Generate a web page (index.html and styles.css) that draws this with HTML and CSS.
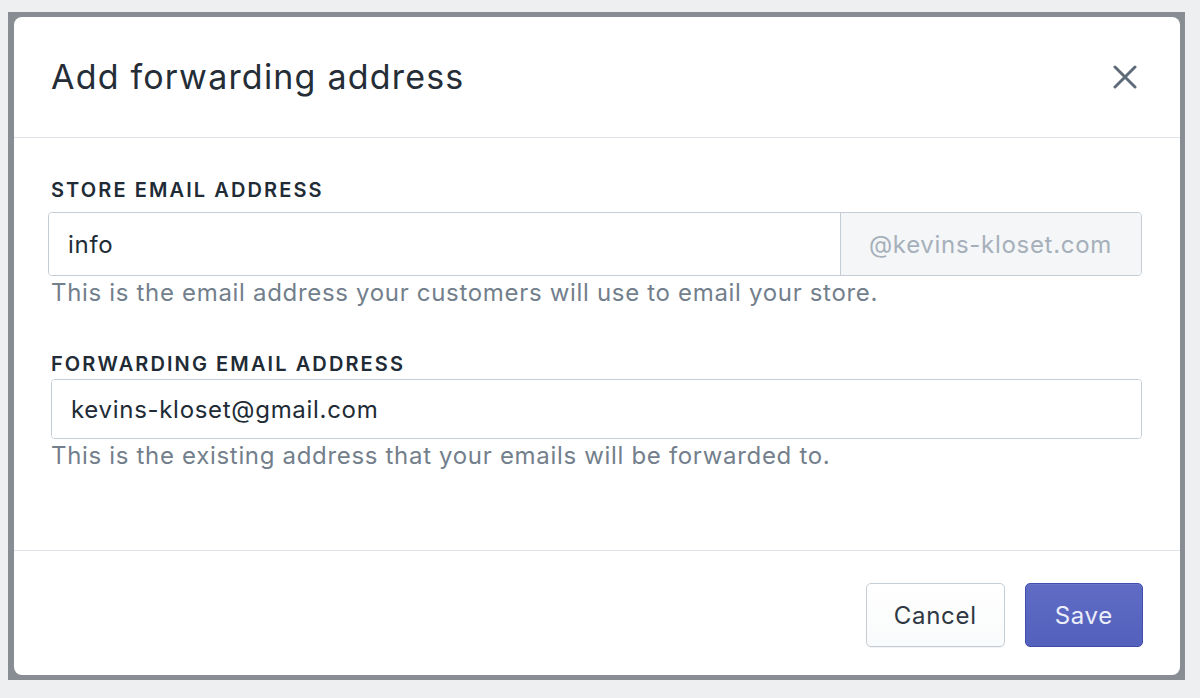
FILE: index.html
```html
<!DOCTYPE html>
<html lang="en">
<head>
  <meta charset="UTF-8" />
  <meta name="viewport" content="width=device-width, initial-scale=1.0"/>
  <title>Add forwarding address</title>
  <link rel="stylesheet" href="styles.css">
</head>
<body>

<div class="backdrop">
  <div class="modal">

    <div class="modal-header">
      <h2 class="modal-title">Add forwarding address</h2>
      <button class="close" aria-label="Close">
        <svg width="24" height="24" viewBox="0 0 24 24">
          <path d="M2 2 L22 22 M22 2 L2 22" stroke="#5f6b78" stroke-width="3" stroke-linecap="round" fill="none"/>
        </svg>
      </button>
    </div>

    <div class="modal-body">
      <div class="field field-store">
        <label class="label" for="store">STORE EMAIL ADDRESS</label>
        <div class="input-group">
          <input id="store" class="input" type="text" value="info"/>
          <span class="suffix">@kevins-kloset.com</span>
        </div>
        <p class="help">This is the email address your customers will use to email your store.</p>
      </div>

      <div class="field field-forward">
        <label class="label" for="forward">FORWARDING EMAIL ADDRESS</label>
        <div class="input-group">
          <input id="forward" class="input" type="text" value="kevins-kloset@gmail.com"/>
        </div>
        <p class="help">This is the existing address that your emails will be forwarded to.</p>
      </div>
    </div>

    <div class="modal-footer">
      <button class="btn">Cancel</button>
      <button class="btn btn-primary">Save</button>
    </div>

  </div>
</div>

</body>
</html>
```

FILE: styles.css
```css
:root {
  --ink: #212b36;
  --subdued: #737f8c;
  --border: #c4cdd5;
  --divider: #dfe3e8;
  --primary: #5c6ac4;
}
* {
  box-sizing: border-box;
}
body {
  margin: 0;
  background: #eeeff0;
  font-family: Inter, "Liberation Sans", sans-serif;
  color: var(--ink);
}
.backdrop {
  margin: 12px 0 0 8px;
  width: 1177px;
  height: 668px;
  padding: 5px 5px 5px 6px;
  background: #878d93;
}
.modal {
  height: 100%;
  background: #fff;
  border-radius: 8px;
  display: flex;
  flex-direction: column;
}
.modal-header {
  height: 121px;
  padding: 0 38px 0 37px;
  border-bottom: 1px solid var(--divider);
  display: flex;
  align-items: center;
  justify-content: space-between;
}
.modal-title {
  margin: 0;
  font-size: 34px;
  font-weight: 400;
  line-height: 40px;
  letter-spacing: 1.2px;
  color: #252d37;
}
.close {
  background: none;
  border: none;
  padding: 0;
  margin-right: 5px;
  width: 24px;
  height: 24px;
  cursor: pointer;
}
.close svg {
  display: block;
}
.modal-body {
  flex: 1;
  padding: 40px 38px 0 37px;
}
.label {
  display: block;
  font-size: 20px;
  line-height: 24px;
  font-weight: 600;
  letter-spacing: 2.1px;
  color: var(--ink);
}
.field-store .label {
  margin-bottom: 10px;
}
.field-forward {
  margin-top: 45px;
}
.field-forward .label {
  margin-bottom: 3px;
}
.input-group {
  display: flex;
  border: 1px solid var(--border);
  border-radius: 4px;
  overflow: hidden;
}
.field-store .input-group {
  height: 64px;
  margin-left: -3px;
}
.field-forward .input-group {
  height: 60px;
}
.input {
  flex: 1;
  min-width: 0;
  border: none;
  padding: 0 19px;
  font-family: inherit;
  font-size: 24px;
  letter-spacing: 0.7px;
  color: var(--ink);
  background: #fff;
  outline: none;
}
.suffix {
  display: flex;
  align-items: center;
  padding: 0 29px 0 28px;
  border-left: 1px solid var(--border);
  background: #f4f6f8;
  font-size: 24px;
  letter-spacing: 0.7px;
  color: #a6b0ba;
}
.help {
  margin: 3px 0 0;
  font-size: 24px;
  line-height: 28px;
  letter-spacing: 0.68px;
  color: var(--subdued);
}
.modal-footer {
  padding: 32px 37px 28px;
  border-top: 1px solid var(--divider);
  display: flex;
  justify-content: flex-end;
  gap: 20px;
}
.btn {
  height: 64px;
  padding: 0 27px;
  border: 1px solid var(--border);
  border-radius: 5px;
  background: linear-gradient(180deg, #fff, #f9fafb);
  box-shadow: 0 1px 0 0 rgba(22,29,37,0.05);
  font-family: inherit;
  font-size: 24px;
  letter-spacing: 0.7px;
  color: #2f3843;
  cursor: pointer;
}
.btn-primary {
  padding: 0 29px;
  border-color: #3f4eae;
  background: linear-gradient(180deg, #606cc4, #5361bd);
  box-shadow: inset 0 1px 0 0 #6774c8;
  color: #eceef9;
}
```
